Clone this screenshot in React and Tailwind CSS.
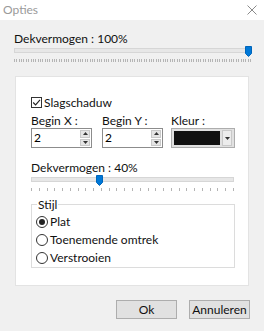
import React from 'react'

const font = { fontFamily: 'Lato, "Noto Sans", sans-serif' }

function Ticks({ count, width }) {
  const step = (width - 1) / (count - 1)
  return (
    <svg width={width} height="3" className="block">
      {Array.from({ length: count }).map((_, i) => (
        <line key={i} x1={Math.round(i * step) + 0.5} x2={Math.round(i * step) + 0.5} y1="0" y2="3" stroke="#b4b4b4" strokeWidth="1" />
      ))}
    </svg>
  )
}

function Slider({ width, pos, ticks }) {
  return (
    <div style={{ width }}>
      <div className="relative h-[11px]">
        <div className="absolute left-0 right-0 top-[2px] h-[5px] bg-[#e7e7e7] border border-[#d6d6d6]" />
        <svg width="7" height="11" className="absolute top-0" style={{ left: pos - 3 }}>
          <path d="M0.5 0.5 H6.5 V7.5 L3.5 10.5 L0.5 7.5 Z" fill="#0078d7" stroke="#0065ba" />
        </svg>
      </div>
      <div className="mt-[2px]">
        <Ticks count={ticks} width={width} />
      </div>
    </div>
  )
}

function Spin({ value }) {
  return (
    <div className="w-[61px] h-[20px] border border-[#8c8c8c] bg-white flex items-center">
      <span className="flex-1 pl-[2px] text-[12px] leading-none text-black">{value}</span>
      <div className="w-[10px] h-[16px] mr-[1px] flex flex-col gap-[1px]">
        <div className="flex-1 bg-[#e5e5e5] border border-[#c9c9c9] flex items-center justify-center">
          <svg width="5" height="3"><path d="M0 3 L2.5 0 L5 3 Z" fill="#333" /></svg>
        </div>
        <div className="flex-1 bg-[#e5e5e5] border border-[#c9c9c9] flex items-center justify-center">
          <svg width="5" height="3"><path d="M0 0 L2.5 3 L5 0 Z" fill="#333" /></svg>
        </div>
      </div>
    </div>
  )
}

function Radio({ checked, label }) {
  return (
    <div className="flex items-center gap-[2px] h-[18px]">
      <div className="w-[12px] h-[12px] rounded-full border border-[#333] bg-white flex items-center justify-center">
        {checked && <div className="w-[6px] h-[6px] rounded-full bg-[#222]" />}
      </div>
      <span className="text-[12px] text-[#111] leading-none">{label}</span>
    </div>
  )
}

export default function App() {
  return (
    <div className="w-[264px] h-[331px] bg-[#f0f0f0] flex flex-col" style={font}>
      {/* Title */}
      <div className="h-[20px] bg-white flex items-center justify-between pl-[3px] pr-[7px]">
        <span className="text-[12px] text-[#9a9a9a]">Opties</span>
        <svg width="10" height="10" viewBox="0 0 10 10">
          <path d="M0.5 0.5 L9.5 9.5 M9.5 0.5 L0.5 9.5" stroke="#8a8a8a" strokeWidth="1" />
        </svg>
      </div>

      <div className="px-[14px] pt-[12px]">
        <div className="text-[12px] leading-[14px] text-[#111]">Dekvermogen : 100%</div>
        <Slider width={237} pos={234} ticks={101} />
      </div>

      {/* Panel */}
      <div className="mx-[15px] mt-[14px] h-[210px] bg-white border border-[#e3e3e3] px-[15px] pt-[20px]">
        <div className="flex items-center gap-[2px] h-[11px]">
          <div className="w-[11px] h-[11px] border border-[#333] bg-white flex items-center justify-center">
            <svg width="9" height="9" viewBox="0 0 9 9">
              <path d="M1.2 4.5 L3.6 6.9 L8 1.8" stroke="#222" strokeWidth="1.1" fill="none" />
            </svg>
          </div>
          <span className="text-[12px] leading-none text-[#111]">Slagschaduw</span>
        </div>

        <div className="flex mt-[6px] gap-[10px]">
          <div>
            <div className="text-[12px] leading-[14px] text-[#111]">Begin X :</div>
            <Spin value="2" />
          </div>
          <div>
            <div className="text-[12px] leading-[14px] text-[#111]">Begin Y :</div>
            <Spin value="2" />
          </div>
          <div className="ml-[-2px]">
            <div className="text-[12px] leading-[14px] text-[#111]">Kleur :</div>
            <div className="w-[64px] h-[20px] border border-[#adadad] bg-[#e1e1e1] flex items-center px-[2px] gap-[2px]">
              <div className="w-[46px] h-[14px] bg-[#111]" />
              <div className="flex-1 h-[16px] bg-[#ececec] border border-[#c9c9c9] flex items-center justify-center">
                <svg width="5" height="3"><path d="M0 0 L2.5 3 L5 0 Z" fill="#333" /></svg>
              </div>
            </div>
          </div>
        </div>

        <div className="text-[12px] leading-[15px] text-[#111] mt-[12px]">Dekvermogen : 40%</div>
        <Slider width={203} pos={68} ticks={27} />

        <div className="relative mt-[13px] w-[204px] h-[64px] border border-[#dcdcdc] px-[4px] pt-[8px]">
          <span className="absolute left-[5px] top-[-8px] bg-white px-[1px] text-[12px] leading-[15px] text-[#111]">Stijl</span>
          <Radio checked label="Plat" />
          <Radio label="Toenemende omtrek" />
          <Radio label="Verstrooien" />
        </div>
      </div>

      {/* Buttons */}
      <div className="flex justify-end gap-[12px] pr-[14px] mt-[14px]">
        <button className="w-[61px] h-[19px] bg-[#e1e1e1] border border-[#adadad] text-[12px] leading-none text-[#111]">Ok</button>
        <button className="w-[61px] h-[19px] bg-[#e1e1e1] border border-[#adadad] text-[12px] leading-none text-[#111]">Annuleren</button>
      </div>
    </div>
  )
}
